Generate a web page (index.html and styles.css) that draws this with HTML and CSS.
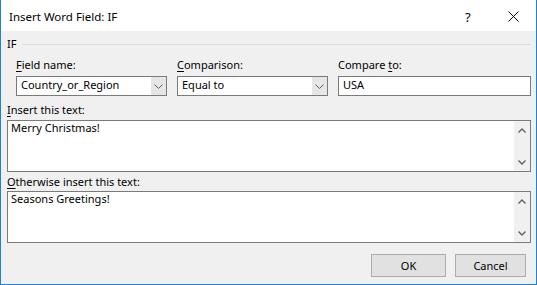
FILE: index.html
```html
<!DOCTYPE html>
<html>
<head>
<meta charset="utf-8">
<link rel="stylesheet" href="styles.css">
</head>
<body>
<div class="win">
  <div class="titlebar">
    <span class="title">Insert Word Field: IF</span>
    <span class="help">?</span>
    <svg class="close" width="11" height="11" viewBox="0 0 11 11"><path d="M0.5 0.5L10.5 10.5M10.5 0.5L0.5 10.5" stroke="#000" stroke-width="1" fill="none"/></svg>
  </div>
  <div class="body">
    <div class="group"><span class="group-label">IF</span><span class="group-line"></span></div>
    <div class="fields">
      <div class="field narrow">
        <div class="lbl"><u>F</u>ield name:</div>
        <div class="combo"><span class="combo-text">Country_or_Region</span><span class="drop"><svg width="9" height="5" viewBox="0 0 9 5"><path d="M0.5 0.5L4.5 4.5L8.5 0.5" stroke="#606060" stroke-width="1" fill="none"/></svg></span></div>
      </div>
      <div class="field narrow">
        <div class="lbl"><u>C</u>omparison:</div>
        <div class="combo"><span class="combo-text">Equal to</span><span class="drop"><svg width="9" height="5" viewBox="0 0 9 5"><path d="M0.5 0.5L4.5 4.5L8.5 0.5" stroke="#606060" stroke-width="1" fill="none"/></svg></span></div>
      </div>
      <div class="field wide">
        <div class="lbl">Compare <u>t</u>o:</div>
        <div class="input"><span class="combo-text">USA</span></div>
      </div>
    </div>
    <div class="lbl block first"><u>I</u>nsert this text:</div>
    <div class="area">
      <div class="area-text">Merry Christmas!</div>
      <div class="sb">
        <svg width="8" height="5" viewBox="0 0 8 5"><path d="M0.5 4.5L4 1L7.5 4.5" stroke="#606060" stroke-width="1.4" fill="none"/></svg>
        <svg width="8" height="5" viewBox="0 0 8 5"><path d="M0.5 0.5L4 4L7.5 0.5" stroke="#606060" stroke-width="1.4" fill="none"/></svg>
      </div>
    </div>
    <div class="lbl block second"><u>O</u>therwise insert this text:</div>
    <div class="area">
      <div class="area-text">Seasons Greetings!</div>
      <div class="sb">
        <svg width="8" height="5" viewBox="0 0 8 5"><path d="M0.5 4.5L4 1L7.5 4.5" stroke="#606060" stroke-width="1.4" fill="none"/></svg>
        <svg width="8" height="5" viewBox="0 0 8 5"><path d="M0.5 0.5L4 4L7.5 0.5" stroke="#606060" stroke-width="1.4" fill="none"/></svg>
      </div>
    </div>
    <div class="buttons">
      <div class="btn ok">OK</div>
      <div class="btn cancel">Cancel</div>
    </div>
  </div>
</div>
</body>
</html>
```
FILE: styles.css
```css
* { box-sizing: border-box; }
html, body { margin: 0; padding: 0; }
body {
  font-family: "Noto Sans", "Open Sans", sans-serif;
  font-size: 11px;
  line-height: 16px;
  color: #000;
  background: #fff;
}
.win {
  width: 537px;
  height: 285px;
  border: 1px solid #1883d7;
  border-top: none;
  display: flex;
  flex-direction: column;
  background: #fff;
}
.titlebar {
  height: 31px;
  flex: none;
  display: flex;
  align-items: center;
  padding: 2px 0 0 8px;
  background: #fff;
  font-size: 11.5px;
}
.title { flex: 1; }
.help {
  font-size: 13px;
  width: 7px;
  margin-right: 36px;
}
.close { margin-right: 17px; display: block; }
.body {
  flex: 1;
  background: #f0f0f0;
  padding: 5px 5px 0 6px;
  display: flex;
  flex-direction: column;
}
.group {
  display: flex;
  align-items: center;
  gap: 6px;
}
.group-line {
  flex: 1;
  height: 1px;
  background: #dcdcdc;
}
.fields {
  display: flex;
  gap: 10px;
  padding-left: 9px;
  margin-top: 5px;
}
.field.narrow { width: 151px; }
.field.wide { flex: 1; }
.lbl u { text-decoration: underline; text-underline-offset: 2px; }
.combo, .input {
  margin-top: 3px;
  height: 20px;
  border: 1px solid #7a7a7a;
  background: #fff;
  display: flex;
  align-items: flex-start;
  padding-left: 4px;
}
.combo-text { flex: 1; }
.drop {
  width: 15px;
  height: 18px;
  background: #e6e6e6;
  display: flex;
  align-items: center;
  justify-content: center;
}
.drop svg { display: block; }
.block.first { margin-top: 6px; }
.block.second { margin-top: 2px; }
.area {
  margin-top: 2px;
  height: 52px;
  border: 1px solid #7a7a7a;
  background: #fff;
  display: flex;
}
.block.second + .area { margin-top: 1px; }
.area-text {
  flex: 1;
  padding: 0 0 0 3px;
  line-height: 14px;
}
.sb {
  width: 16px;
  background: #f0f0f0;
  display: flex;
  flex-direction: column;
  align-items: center;
  justify-content: space-between;
  padding: 7px 0 6px;
}
.sb svg { display: block; }
.buttons {
  margin-top: 11px;
  display: flex;
  justify-content: flex-end;
  gap: 9px;
  padding-right: 5px;
}
.btn {
  height: 23px;
  border: 1px solid #adadad;
  background: #e1e1e1;
  display: flex;
  align-items: center;
  justify-content: center;
}
.btn.ok { width: 75px; }
.btn.cancel { width: 71px; }
```
